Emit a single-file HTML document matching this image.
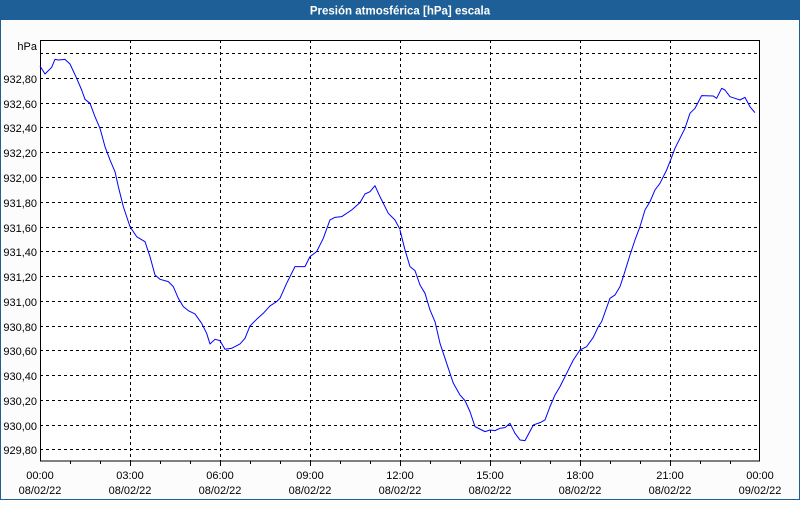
<!DOCTYPE html>
<html><head><meta charset="utf-8"><style>
html,body{margin:0;padding:0}
body{width:800px;height:500px;overflow:hidden;background:#fff;font-family:"Liberation Sans",Tahoma,sans-serif}
svg text{font-family:"Liberation Sans",Tahoma,sans-serif;font-size:11px;fill:#000}
</style></head><body>
<svg width="800" height="500" xmlns="http://www.w3.org/2000/svg" shape-rendering="crispEdges">
<rect x="0" y="0" width="800" height="500" fill="#fcfcfc"/>
<rect x="0.5" y="0.5" width="799" height="499" fill="none" stroke="#1d5f96"/>
<rect x="0" y="0" width="800" height="20" fill="#1d5f96"/>
<text x="400" y="14.5" text-anchor="middle" style="fill:#fff;font-weight:bold;font-size:11.5px">Presión atmosférica [hPa] escala</text>
<rect x="40" y="40" width="720" height="421" fill="#fff"/>
<g stroke="#000" stroke-width="1" stroke-dasharray="3,3">
<line x1="40" y1="53.5" x2="760" y2="53.5"/><line x1="40" y1="78.5" x2="760" y2="78.5"/>
<line x1="40" y1="103.5" x2="760" y2="103.5"/><line x1="40" y1="127.5" x2="760" y2="127.5"/>
<line x1="40" y1="152.5" x2="760" y2="152.5"/><line x1="40" y1="177.5" x2="760" y2="177.5"/>
<line x1="40" y1="202.5" x2="760" y2="202.5"/><line x1="40" y1="227.5" x2="760" y2="227.5"/>
<line x1="40" y1="251.5" x2="760" y2="251.5"/><line x1="40" y1="276.5" x2="760" y2="276.5"/>
<line x1="40" y1="301.5" x2="760" y2="301.5"/><line x1="40" y1="326.5" x2="760" y2="326.5"/>
<line x1="40" y1="350.5" x2="760" y2="350.5"/><line x1="40" y1="375.5" x2="760" y2="375.5"/>
<line x1="40" y1="400.5" x2="760" y2="400.5"/><line x1="40" y1="425.5" x2="760" y2="425.5"/>
<line x1="40" y1="449.5" x2="760" y2="449.5"/>
<line x1="130.5" y1="40" x2="130.5" y2="461"/><line x1="220.5" y1="40" x2="220.5" y2="461"/>
<line x1="310.5" y1="40" x2="310.5" y2="461"/><line x1="400.5" y1="40" x2="400.5" y2="461"/>
<line x1="490.5" y1="40" x2="490.5" y2="461"/><line x1="580.5" y1="40" x2="580.5" y2="461"/>
<line x1="670.5" y1="40" x2="670.5" y2="461"/>
</g>
<g stroke="#000">
<line x1="70.5" y1="461" x2="70.5" y2="464"/><line x1="100.5" y1="461" x2="100.5" y2="464"/><line x1="130.5" y1="461" x2="130.5" y2="466"/>
<line x1="160.5" y1="461" x2="160.5" y2="464"/><line x1="190.5" y1="461" x2="190.5" y2="464"/><line x1="220.5" y1="461" x2="220.5" y2="466"/>
<line x1="250.5" y1="461" x2="250.5" y2="464"/><line x1="280.5" y1="461" x2="280.5" y2="464"/><line x1="310.5" y1="461" x2="310.5" y2="466"/>
<line x1="340.5" y1="461" x2="340.5" y2="464"/><line x1="370.5" y1="461" x2="370.5" y2="464"/><line x1="400.5" y1="461" x2="400.5" y2="466"/>
<line x1="430.5" y1="461" x2="430.5" y2="464"/><line x1="460.5" y1="461" x2="460.5" y2="464"/><line x1="490.5" y1="461" x2="490.5" y2="466"/>
<line x1="520.5" y1="461" x2="520.5" y2="464"/><line x1="550.5" y1="461" x2="550.5" y2="464"/><line x1="580.5" y1="461" x2="580.5" y2="466"/>
<line x1="610.5" y1="461" x2="610.5" y2="464"/><line x1="640.5" y1="461" x2="640.5" y2="464"/><line x1="670.5" y1="461" x2="670.5" y2="466"/>
<line x1="700.5" y1="461" x2="700.5" y2="464"/><line x1="730.5" y1="461" x2="730.5" y2="464"/>
</g>
<rect x="40.5" y="40.5" width="719" height="420.5" fill="none" stroke="#000"/>
<g fill="none" stroke="#0000ff" stroke-width="3" shape-rendering="auto" stroke-linejoin="round">
<polyline transform="translate(40,40) scale(0.3333)" vector-effect="non-scaling-stroke" style="stroke-width:1" points="0,78 15,102 35,82 45,58 55,60 75,58 90,72 110,115 125,150 135,178 150,190 165,230 180,265 195,320 210,360 225,395 235,440 250,500 270,560 290,590 315,605 330,650 345,705 360,718 385,725 400,740 415,775 430,800 445,812 465,822 485,850 500,880 510,912 525,898 540,902 555,928 575,925 600,912 615,895 630,858 650,838 670,820 690,798 710,785 720,775 740,730 765,680 795,680 810,650 830,635 850,595 870,540 885,532 905,530 935,510 960,488 975,462 990,455 1005,437 1020,470 1045,520 1065,540 1080,568"/>
<polyline transform="translate(400,80) scale(0.3333)" vector-effect="non-scaling-stroke" style="stroke-width:1" points="0,450 15,510 30,560 45,572 60,615 75,640 90,690 105,725 120,790 140,850 160,910 180,945 195,962 210,995 225,1040 255,1055 270,1050 285,1052 300,1045 315,1043 330,1030 345,1060 360,1080 375,1082 400,1035 420,1028 435,1020 450,980 465,945 480,920 500,880 520,840 540,810 560,800 580,772 595,740 605,725 630,655 645,645 660,620 670,590 690,525 705,480 720,440 735,390 750,365 765,330 780,310 800,270 810,245 825,205 855,145 870,100 885,85 905,47 940,48 950,55 965,25 975,30 990,50 1005,55 1020,60 1035,52 1050,80 1065,98"/>
</g>
<g text-anchor="end">
<text x="37" y="50">hPa</text>
<text x="37" y="83">932,80</text><text x="37" y="108">932,60</text><text x="37" y="132">932,40</text>
<text x="37" y="157">932,20</text><text x="37" y="182">932,00</text><text x="37" y="207">931,80</text>
<text x="37" y="232">931,60</text><text x="37" y="256">931,40</text><text x="37" y="281">931,20</text>
<text x="37" y="306">931,00</text><text x="37" y="331">930,80</text><text x="37" y="355">930,60</text>
<text x="37" y="380">930,40</text><text x="37" y="405">930,20</text><text x="37" y="430">930,00</text>
<text x="37" y="454">929,80</text>
</g>
<g text-anchor="middle">
<text x="40" y="479">00:00</text><text x="40" y="494">08/02/22</text>
<text x="130" y="479">03:00</text><text x="130" y="494">08/02/22</text>
<text x="220" y="479">06:00</text><text x="220" y="494">08/02/22</text>
<text x="310" y="479">09:00</text><text x="310" y="494">08/02/22</text>
<text x="400" y="479">12:00</text><text x="400" y="494">08/02/22</text>
<text x="490" y="479">15:00</text><text x="490" y="494">08/02/22</text>
<text x="580" y="479">18:00</text><text x="580" y="494">08/02/22</text>
<text x="670" y="479">21:00</text><text x="670" y="494">08/02/22</text>
<text x="760" y="479">00:00</text><text x="760" y="494">09/02/22</text>
</g>
</svg>
</body></html>
